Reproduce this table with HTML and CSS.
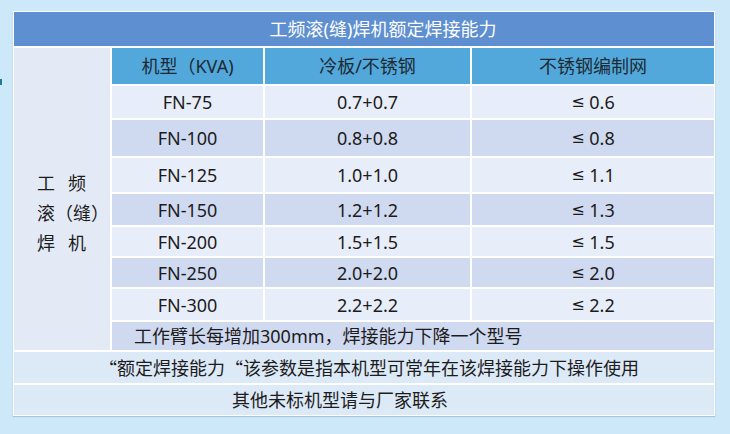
FILE: index.html
```html
<!DOCTYPE html>
<html lang="zh-CN">
<head>
<meta charset="utf-8">
<title>工频滚(缝)焊机额定焊接能力</title>
<link rel="stylesheet" href="styles.css">
</head>
<body>
<div class="page">
  <div class="spec">
    <div class="cell title">工频滚(缝)焊机额定焊接能力</div>

    <div class="cell side">
      <div class="side-text">
        <div class="pair"><span>工</span><span>频</span></div>
        <div>滚（缝）</div>
        <div class="pair"><span>焊</span><span>机</span></div>
      </div>
    </div>

    <div class="cell head">机型（KVA)</div>
    <div class="cell head">冷板/不锈钢</div>
    <div class="cell head">不锈钢编制网</div>

    <div class="cell light">FN-75</div>
    <div class="cell light">0.7+0.7</div>
    <div class="cell light"><span class="le">≤</span>&nbsp;0.6</div>

    <div class="cell dark">FN-100</div>
    <div class="cell dark">0.8+0.8</div>
    <div class="cell dark"><span class="le">≤</span>&nbsp;0.8</div>

    <div class="cell light">FN-125</div>
    <div class="cell light">1.0+1.0</div>
    <div class="cell light"><span class="le">≤</span>&nbsp;1.1</div>

    <div class="cell dark">FN-150</div>
    <div class="cell dark">1.2+1.2</div>
    <div class="cell dark"><span class="le">≤</span>&nbsp;1.3</div>

    <div class="cell light">FN-200</div>
    <div class="cell light">1.5+1.5</div>
    <div class="cell light"><span class="le">≤</span>&nbsp;1.5</div>

    <div class="cell dark">FN-250</div>
    <div class="cell dark">2.0+2.0</div>
    <div class="cell dark"><span class="le">≤</span>&nbsp;2.0</div>

    <div class="cell light">FN-300</div>
    <div class="cell light">2.2+2.2</div>
    <div class="cell light"><span class="le">≤</span>&nbsp;2.2</div>

    <div class="cell dark note">工作臂长每增加300mm，焊接能力下降一个型号</div>

    <div class="cell full full-a"><span class="cjk">“</span>额定焊接能力<span class="cjk">“</span>该参数是指本机型可常年在该焊接能力下操作使用</div>
    <div class="cell full full-b">其他未标机型请与厂家联系</div>
  </div>
</div>
</body>
</html>
```

FILE: styles.css
```css
html, body {
  margin: 0;
  padding: 0;
}

body {
  background: #cde8f8;
  font-family: "Noto Sans", "Noto Sans CJK SC", sans-serif;
  font-size: 18px;
  color: #1c1c1c;
  width: 730px;
  height: 434px;
  overflow: hidden;
}

.page {
  position: relative;
  padding: 11px 0 0 13px;
  height: 423px;
}

.page::before {
  content: "";
  position: absolute;
  left: 0;
  top: 79px;
  width: 2px;
  height: 6px;
  background: #1f7d92;
}

.spec {
  width: 700px;
  border: 1px solid #ffffff;
  background: #ffffff;
  display: grid;
  grid-template-columns: 96px 151px 205px 242px;
  grid-template-rows: 34px 36px 32px 36px 34px 31px 29px 29px 31px 28px 31px 30px;
  column-gap: 2px;
  row-gap: 2px;
  box-shadow: 0 1px 1px rgba(120, 130, 150, 0.35);
}

.cell {
  display: flex;
  align-items: center;
  justify-content: center;
  white-space: nowrap;
  line-height: 1;
}

.le {
  font-family: "DejaVu Sans", "Liberation Sans", sans-serif;
  font-size: 16px;
}

.cjk {
  font-family: "Noto Sans CJK SC", sans-serif;
}

.title {
  grid-column: 1 / 5;
  background: #5e8fd0;
  color: #ffffff;
  padding-left: 38px;
}

.head {
  background: #52a8da;
  color: #1e2a33;
}

.side {
  grid-column: 1;
  grid-row: 2 / 11;
  background: #e3eaf6;
  justify-content: flex-start;
  padding: 28px 0 0 23px;
}

.side-text {
  display: flex;
  flex-direction: column;
  line-height: 30px;
}

.pair {
  display: flex;
  gap: 13px;
}

.light {
  background: #e8eef9;
}

.dark {
  background: #cfd9f0;
}

.note {
  grid-column: 2 / 5;
  justify-content: flex-start;
  padding-left: 22px;
}

.full {
  grid-column: 1 / 5;
  background: #dce9f7;
}

.full-a {
  padding-left: 10px;
}

.full-b {
  padding-right: 48px;
}
```
